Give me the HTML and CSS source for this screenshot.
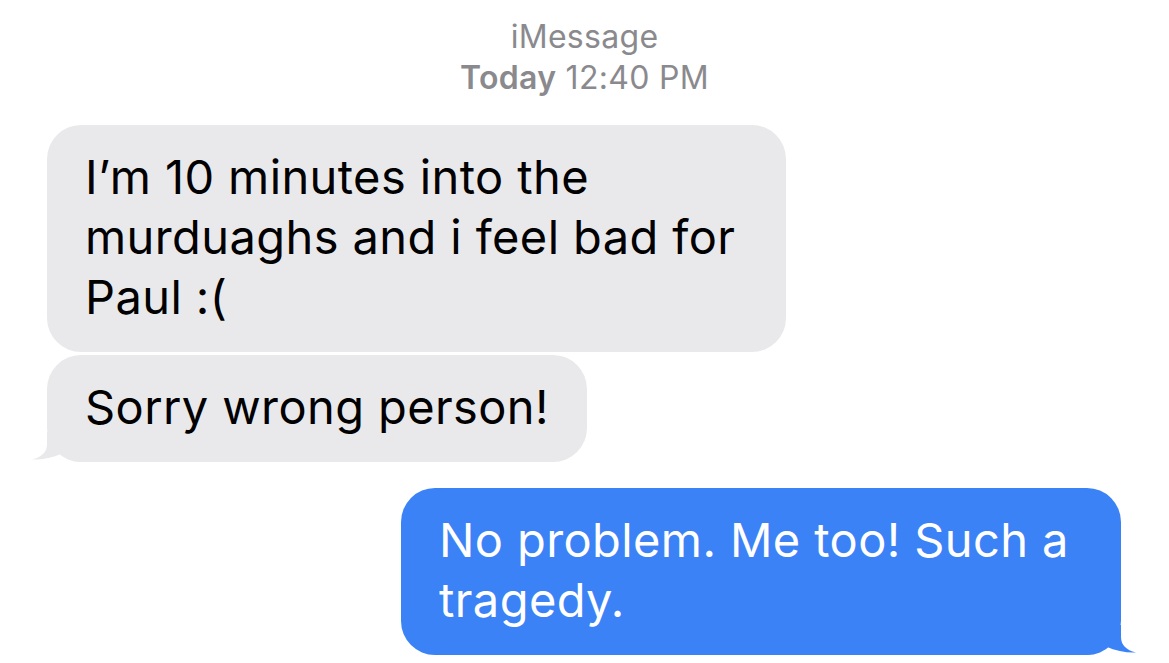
FILE: index.html
```html
<!DOCTYPE html>
<html lang="en">
<head>
  <meta charset="UTF-8" />
  <meta name="viewport" content="width=device-width, initial-scale=1.0"/>
  <title>iMessage</title>
  <link rel="stylesheet" href="styles.css">
</head>
<body>
  <div class="header">
    <div>iMessage</div>
    <div><b>Today</b> 12:40 PM</div>
  </div>

  <div class="thread">
    <div class="bubble them wide">I’m 10 minutes into the murduaghs and i feel bad for Paul :(</div>
    <div class="bubble them last">
      Sorry wrong person!
      <svg class="tail" viewBox="0 0 50 30" width="50" height="30"><path d="M16 0 L16 12 C16 20 11 25 1 27.5 C10 28 21 26 31 21.5 C37 26 43 29 50 30 L50 0 Z"/></svg>
    </div>
    <div class="bubble me">
      No problem. Me too! Such a tragedy.
      <svg class="tail" viewBox="0 0 50 30" width="50" height="30"><path d="M16 0 L16 12 C16 20 11 25 1 27.5 C10 28 21 26 31 21.5 C37 26 43 29 50 30 L50 0 Z"/></svg>
    </div>
  </div>
</body>
</html>
```

FILE: styles.css
```css
body { margin: 0; background: #fff; font-family: Inter, "Noto Sans", sans-serif; }
.header { text-align: center; color: #8a8a8e; font-size: 32px; letter-spacing: 0.3px; line-height: 41px; padding-top: 16px; }
.header b { font-weight: 600; }
.thread { display: flex; flex-direction: column; padding: 27px 48px 0 47px; }
.bubble { position: relative; font-size: 47px; letter-spacing: 0.4px; line-height: 60px; padding: 22px 38px 25px 38px; border-radius: 34px; align-self: flex-start; }
.them { background: #e9e9eb; color: #000; }
.wide { width: 739px; box-sizing: border-box; }
.last { margin-top: 3px; }
.me { background: #3b82f6; color: #fff; align-self: flex-end; width: 720px; box-sizing: border-box; margin-top: 26px; }
.tail { position: absolute; bottom: 0; }
.them .tail { left: -16px; fill: #e9e9eb; }
.me .tail { right: -16px; fill: #3b82f6; transform: scaleX(-1); }
```
